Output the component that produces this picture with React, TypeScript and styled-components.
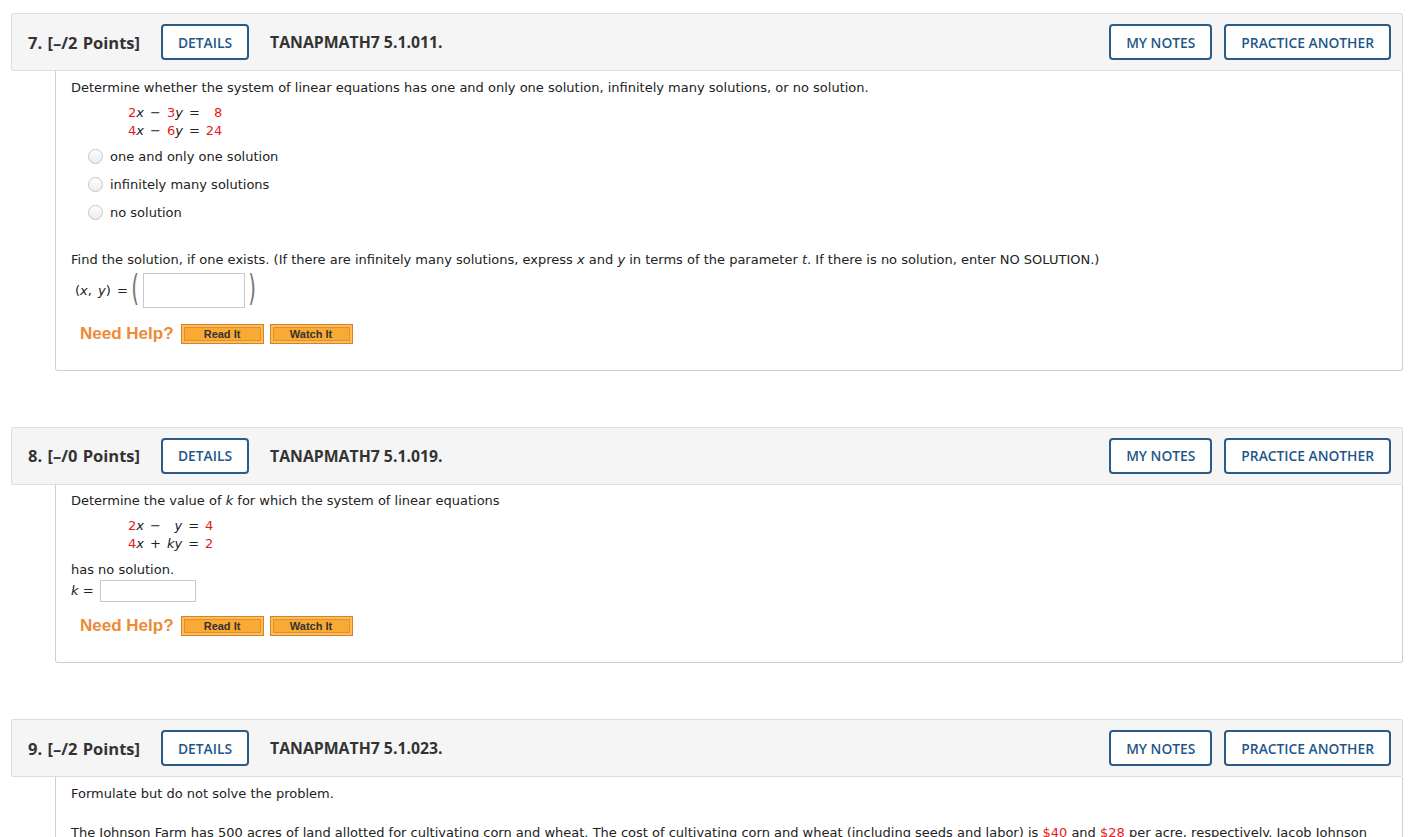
import React from 'react'
import styled, {createGlobalStyle} from 'styled-components'

const Global = createGlobalStyle`
  html, body {
    margin: 0;
    padding: 0;
    background: #fff;
  }
  body {
    font-family: "DejaVu Sans", Verdana, sans-serif;
    color: #222;
    overflow: hidden;
  }
`

const Page = styled.div`
  padding: 13px 17px 0 11px;
  display: flex;
  flex-direction: column;
  gap: 56px;
`

const Question = styled.section``

const Header = styled.header`
  display: flex;
  align-items: center;
  height: 56px;
  padding: 0 11px 0 16px;
  background: #f5f5f5;
  border: 1px solid #dedede;
  border-radius: 2px;
  font-family: "Open Sans", sans-serif;
`

const Points = styled.span`
  font-size: 16.5px;
  font-weight: 700;
  color: #333;
  margin-right: 21px;
  word-spacing: 1px;
`

const Title = styled.span`
  font-size: 15.8px;
  font-weight: 700;
  color: #333;
  margin-left: 21px;
`

const Spacer = styled.div`
  flex: 1;
`

const HeadButton = styled.button<{ $gap?: boolean }>`
  height: 36px;
  padding: 0 15px;
  margin-left: ${p => (p.$gap ? '12px' : '0')};
  background: #fff;
  border: 2px solid #2c5b86;
  border-radius: 4px;
  font-family: "Open Sans", sans-serif;
  font-size: 13.8px;
  font-weight: 600;
  color: #1f5689;
`

const Body = styled.div`
  margin-left: 44px;
  border: 1px solid #cfcfcf;
  border-top: none;
  border-radius: 0 0 3px 3px;
  padding: 7.5px 15px 26px;
  font-size: 13px;
  line-height: 18px;
`

const Text = styled.p<{ $top?: number }>`
  margin: ${p => p.$top ?? 0}px 0 0;
`

const Eqns = styled.div`
  display: grid;
  grid-template-columns: repeat(5, auto);
  justify-content: start;
  column-gap: 6px;
  margin: 7px 0 0 57px;
`

const Cell = styled.span<{ $right?: boolean }>`
  text-align: ${p => (p.$right ? 'right' : 'left')};
`

const Red = styled.span`
  color: #e8191c;
`

const Options = styled.div`
  display: flex;
  flex-direction: column;
  gap: 10px;
  margin: 8px 0 0 17px;
`

const Option = styled.label`
  display: flex;
  align-items: center;
  gap: 7px;
`

const Radio = styled.span`
  width: 13px;
  height: 13px;
  border-radius: 50%;
  border: 1px solid #c4c4c4;
  background: linear-gradient(#fff, #ececec);
`

const AnswerRow = styled.div`
  display: flex;
  align-items: center;
  margin: 1px 0 0 4px;
  word-spacing: 2px;
`

const KRow = styled.div`
  display: flex;
  align-items: center;
  gap: 6px;
  margin-top: 1px;
`

const Paren = styled.span`
  font-size: 36px;
  font-weight: 400;
  color: #777;
  font-family: "DejaVu Sans", sans-serif;
  line-height: 36px;
  margin: 0 1px 6px 0;
  transform: scaleX(0.55);
`

const Box = styled.span<{ $w: number; $h: number }>`
  display: inline-block;
  width: ${p => p.$w}px;
  height: ${p => p.$h}px;
  border: 1px solid #c9c9c9;
  box-sizing: border-box;
  background: #fff;
`

const Help = styled.div<{ $top: number }>`
  display: flex;
  align-items: center;
  gap: 6px;
  margin: ${p => p.$top}px 0 0 9px;
`

const HelpLabel = styled.span`
  font-family: "Liberation Sans", Arial, sans-serif;
  font-size: 17px;
  font-weight: 700;
  color: #ec8a37;
  margin-right: 1px;
`

const HelpButton = styled.button`
  width: 83px;
  height: 20px;
  padding: 0;
  border: 1px solid #d4812d;
  background: #f9aa35;
  box-shadow: inset 0 0 0 2px #fcbd59, inset 0 0 0 3px #e28f2c;
  font-family: "Liberation Sans", Arial, sans-serif;
  font-size: 11px;
  font-weight: 700;
  color: #333;
`

const x = <i>x</i>
const y = <i>y</i>

export default function App() {
  return (
    <>
      <Global />
      <Page>
        <Question>
          <Header>
            <Points>7. [–/2 Points]</Points>
            <HeadButton>DETAILS</HeadButton>
            <Title>TANAPMATH7 5.1.011.</Title>
            <Spacer />
            <HeadButton>MY NOTES</HeadButton>
            <HeadButton $gap>PRACTICE ANOTHER</HeadButton>
          </Header>
          <Body>
            <Text>
              Determine whether the system of linear equations has one and only one solution, infinitely many
              solutions, or no solution.
            </Text>
            <Eqns>
              <Cell><Red>2</Red>{x}</Cell><Cell>−</Cell><Cell $right><Red>3</Red>{y}</Cell><Cell>=</Cell><Cell $right><Red>8</Red></Cell>
              <Cell><Red>4</Red>{x}</Cell><Cell>−</Cell><Cell $right><Red>6</Red>{y}</Cell><Cell>=</Cell><Cell $right><Red>24</Red></Cell>
            </Eqns>
            <Options>
              <Option><Radio />one and only one solution</Option>
              <Option><Radio />infinitely many solutions</Option>
              <Option><Radio />no solution</Option>
            </Options>
            <Text $top={29}>
              Find the solution, if one exists. (If there are infinitely many solutions, express <i>x</i> and <i>y</i> in
              terms of the parameter <i>t</i>. If there is no solution, enter NO SOLUTION.)
            </Text>
            <AnswerRow>
              <span>(<i>x</i>,&nbsp;<i>y</i>) =</span>
              <Paren>(</Paren>
              <Box $w={102} $h={35} />
              <Paren>)</Paren>
            </AnswerRow>
            <Help $top={12}>
              <HelpLabel>Need Help?</HelpLabel>
              <HelpButton>Read It</HelpButton>
              <HelpButton>Watch It</HelpButton>
            </Help>
          </Body>
        </Question>

        <Question>
          <Header>
            <Points>8. [–/0 Points]</Points>
            <HeadButton>DETAILS</HeadButton>
            <Title>TANAPMATH7 5.1.019.</Title>
            <Spacer />
            <HeadButton>MY NOTES</HeadButton>
            <HeadButton $gap>PRACTICE ANOTHER</HeadButton>
          </Header>
          <Body>
            <Text>Determine the value of <i>k</i> for which the system of linear equations</Text>
            <Eqns>
              <Cell><Red>2</Red>{x}</Cell><Cell>−</Cell><Cell $right>{y}</Cell><Cell>=</Cell><Cell $right><Red>4</Red></Cell>
              <Cell><Red>4</Red>{x}</Cell><Cell>+</Cell><Cell $right><i>ky</i></Cell><Cell>=</Cell><Cell $right><Red>2</Red></Cell>
            </Eqns>
            <Text $top={8}>has no solution.</Text>
            <KRow>
              <span><i>k</i> =</span>
              <Box $w={96} $h={22} />
            </KRow>
            <Help $top={14}>
              <HelpLabel>Need Help?</HelpLabel>
              <HelpButton>Read It</HelpButton>
              <HelpButton>Watch It</HelpButton>
            </Help>
          </Body>
        </Question>

        <Question>
          <Header>
            <Points>9. [–/2 Points]</Points>
            <HeadButton>DETAILS</HeadButton>
            <Title>TANAPMATH7 5.1.023.</Title>
            <Spacer />
            <HeadButton>MY NOTES</HeadButton>
            <HeadButton $gap>PRACTICE ANOTHER</HeadButton>
          </Header>
          <Body>
            <Text>Formulate but do not solve the problem.</Text>
            <Text $top={21}>
              The Johnson Farm has 500 acres of land allotted for cultivating corn and wheat. The cost of cultivating
              corn and wheat (including seeds and labor) is <Red>$40</Red> and <Red>$28</Red> per acre, respectively.
              Jacob Johnson has <Red>$17,000</Red> available for cultivating these crops. If he wishes to use all the
              allotted land and his entire budget for cultivating these two crops, how many acres of each crop should
              he plant?
            </Text>
          </Body>
        </Question>
      </Page>
    </>
  )
}
